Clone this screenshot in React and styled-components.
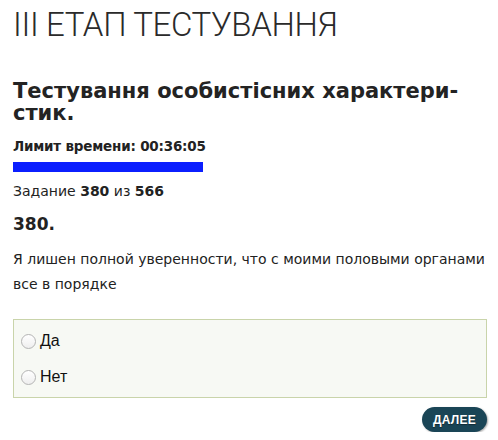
import React from 'react';
import styled, { createGlobalStyle } from 'styled-components';

const GlobalStyle = createGlobalStyle`
	body {
		margin: 0;
		background: #fff;
		font-family: 'DejaVu Sans', 'Liberation Sans', sans-serif;
		color: #222;
	}
`;

const Page = styled.div`
	width: 474px;
	margin-left: 13px;
	padding-top: 5px;
`;
const StageTitle = styled.h1`
	margin: 0;
	font-family: Roboto, 'Liberation Sans', sans-serif;
	font-weight: 300;
	font-size: 33px;
	line-height: 39px;
	color: #2a2a2a;
	letter-spacing: -0.35px;
`;
const TestTitle = styled.h2`
	margin: 36px 0 0;
	font-size: 21px;
	line-height: 22px;
	font-weight: 700;
	color: #232323;
`;
const Timer = styled.div`
	margin-top: 13px;
	font-size: 13.5px;
	font-weight: 700;
	line-height: 18px;
	color: #222;
	letter-spacing: -0.2px;
`;
const TimeBar = styled.div`
	margin-top: 7px;
	height: 10px;
	background: #0b1fff;
`;
const Counter = styled.div`
	margin-top: 10px;
	font-size: 14px;
	line-height: 18px;
	b {
		font-weight: 700;
	}
`;
const QuestionNum = styled.div`
	margin-top: 13px;
	font-size: 17px;
	font-weight: 700;
	line-height: 22px;
`;
const QuestionText = styled.p`
	margin: 12px 0 0;
	font-size: 14px;
	line-height: 25px;
`;
const Options = styled.div`
	margin-top: 22px;
	border: 1px solid #c9d4aa;
	background: #f7f9f4;
	padding: 12px 7px 11px;
	display: flex;
	flex-direction: column;
	gap: 18px;
`;
const Option = styled.label`
	display: flex;
	align-items: center;
	gap: 4px;
	font-size: 16px;
	line-height: 18px;
	color: #111;
	font-family: 'Liberation Sans', Arial, sans-serif;
`;
const Radio = styled.input`
	appearance: none;
	margin: 0;
	width: 15px;
	height: 15px;
	border-radius: 50%;
	border: 1px solid #b4b4b4;
	background: linear-gradient(#ffffff, #eeeeee);
	box-sizing: border-box;
`;
const Actions = styled.div`
	display: flex;
	justify-content: flex-end;
	margin-top: 9px;
`;
const NextButton = styled.button`
	border: none;
	background: #1a4556;
	color: #fff;
	font-family: 'Liberation Sans', Arial, sans-serif;
	font-weight: 700;
	font-size: 12px;
	height: 25px;
	width: 65px;
	border-radius: 13px;
	box-shadow: 1px 1px 2px rgba(0, 0, 0, 0.35);
	text-shadow: 0 1px 1px rgba(0, 0, 0, 0.4);
	letter-spacing: 0.2px;
	padding: 0;
`;

export default function App() {
	return (
		<>
			<GlobalStyle />
			<Page>
				<StageTitle>III ЕТАП ТЕСТУВАННЯ</StageTitle>
				<TestTitle>Тестування особистісних характери{'\u00AD'}стик.</TestTitle>
				<Timer>Лимит времени: 00:36:05</Timer>
				<TimeBar style={{ width: 190 }} />
				<Counter>
					Задание <b>380</b> из <b>566</b>
				</Counter>
				<QuestionNum>380.</QuestionNum>
				<QuestionText>
					Я лишен полной уверенности, что с моими половыми органами все в порядке
				</QuestionText>
				<Options>
					<Option>
						<Radio type="radio" name="answer" />
						Да
					</Option>
					<Option>
						<Radio type="radio" name="answer" />
						Нет
					</Option>
				</Options>
				<Actions>
					<NextButton>ДАЛЕЕ</NextButton>
				</Actions>
			</Page>
		</>
	);
}
